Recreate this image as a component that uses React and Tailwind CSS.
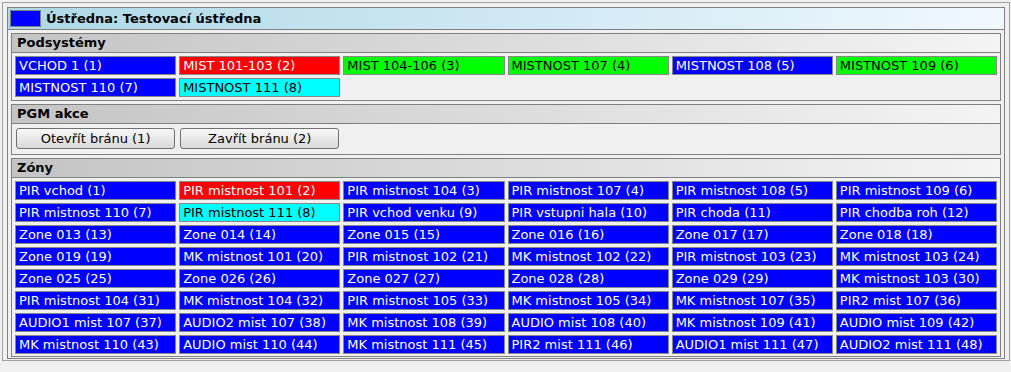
const subsystems = [
  { name: "VCHOD 1 (1)", state: "off" },
  { name: "MIST 101-103 (2)", state: "alarm" },
  { name: "MIST 104-106 (3)", state: "on" },
  { name: "MISTNOST 107 (4)", state: "on" },
  { name: "MISTNOST 108 (5)", state: "off" },
  { name: "MISTNOST 109 (6)", state: "on" },
  { name: "MISTNOST 110 (7)", state: "off" },
  { name: "MISTNOST 111 (8)", state: "open" },
];

const zoneNames = [
  "PIR vchod", "PIR mistnost 101", "PIR mistnost 104", "PIR mistnost 107", "PIR mistnost 108", "PIR mistnost 109",
  "PIR mistnost 110", "PIR mistnost 111", "PIR vchod venku", "PIR vstupni hala", "PIR choda", "PIR chodba roh",
  "Zone 013", "Zone 014", "Zone 015", "Zone 016", "Zone 017", "Zone 018",
  "Zone 019", "MK mistnost 101", "PIR mistnost 102", "MK mistnost 102", "PIR mistnost 103", "MK mistnost 103",
  "Zone 025", "Zone 026", "Zone 027", "Zone 028", "Zone 029", "MK mistnost 103",
  "PIR mistnost 104", "MK mistnost 104", "PIR mistnost 105", "MK mistnost 105", "MK mistnost 107", "PIR2 mist 107",
  "AUDIO1 mist 107", "AUDIO2 mist 107", "MK mistnost 108", "AUDIO mist 108", "MK mistnost 109", "AUDIO mist 109",
  "MK mistnost 110", "AUDIO mist 110", "MK mistnost 111", "PIR2 mist 111", "AUDIO1 mist 111", "AUDIO2 mist 111",
];

// stav zóny -> barva
const zoneState = { 2: "alarm", 8: "open" };

const stateClass = {
  off: "bg-[#0000ff] text-white",
  alarm: "bg-[#ff0000] text-white",
  on: "bg-[#00ff00] text-black",
  open: "bg-[#00ffff] text-black",
};

function Cell({ label, state }) {
  return (
    <div className={"h-[19px] border border-[#888888] pl-[3px] leading-[17px] whitespace-nowrap overflow-hidden " + stateClass[state]}>
      {label}
    </div>
  );
}

function Panel({ title, children, className = "" }) {
  return (
    <div className={"border border-[#808080] " + className}>
      <div className="h-[19px] border-b border-[#808080] bg-gradient-to-r from-[#c4c4c4] to-[#f4f4f4] pl-[5px] font-bold leading-[18px]">
        {title}
      </div>
      {children}
    </div>
  );
}

export default function App() {
  return (
    <div className="min-h-[372px] bg-[#f0f0f0] pl-[2px] pr-[1px] pt-[2px] text-[13px] text-black" style={{ fontFamily: '"DejaVu Sans", Verdana, sans-serif' }}>
      <div className="border border-[#a0a0a0] px-[4px] pt-[4px] pb-[1px]">
        <div className="border border-[#808080]">
          <div className="flex h-[22px] items-center gap-[5px] border-b border-[#808080] bg-gradient-to-r from-[#add8e6] to-[#f0f8ff] pl-[2px]">
            <div className="h-[17px] w-[31px] border border-[#808080] bg-[#0000ff]" />
            <span className="font-bold">Ústředna: Testovací ústředna</span>
          </div>
          <div className="flex flex-col gap-[3px] px-[3px] pt-[3px] pb-[1px]">
            <Panel title="Podsystémy">
              <div className="grid grid-cols-6 gap-[3px] p-[3px]">
                {subsystems.map((s) => (
                  <Cell key={s.name} label={s.name} state={s.state} />
                ))}
              </div>
            </Panel>
            <Panel title="PGM akce">
              <div className="grid grid-cols-6 gap-[3px] px-[3px] pt-[4px] pb-[5px]">
                {["Otevřít bránu (1)", "Zavřít bránu (2)"].map((b) => (
                  <button
                    key={b}
                    className="mx-px h-[21px] rounded-[3px] border border-[#707070] bg-gradient-to-b from-[#f8f8f8] to-[#d8d8d8] text-center leading-[19px] text-black"
                  >
                    {b}
                  </button>
                ))}
              </div>
            </Panel>
            <Panel title="Zóny">
              <div className="grid grid-cols-6 gap-[3px] px-[3px] pt-[3px] pb-[2px]">
                {zoneNames.map((n, i) => (
                  <Cell key={i} label={`${n} (${i + 1})`} state={zoneState[i + 1] || "off"} />
                ))}
              </div>
            </Panel>
          </div>
        </div>
      </div>
    </div>
  );
}
